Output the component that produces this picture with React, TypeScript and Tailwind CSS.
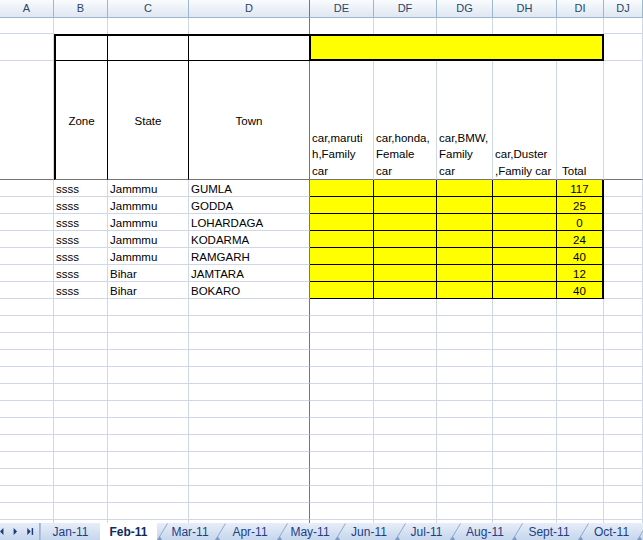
import React from "react"

const COLS = "grid grid-cols-[54px_54px_81px_121px_64px_63px_56px_64px_47px_39px]"
const GRID = "border-[#d0d7e5]"
const FREEZE = "border-r-[#767676]"

const headers = ["A", "B", "C", "D", "DE", "DF", "DG", "DH", "DI", "DJ"]

const rows = [
  { zone: "ssss", state: "Jammmu", town: "GUMLA", total: "117" },
  { zone: "ssss", state: "Jammmu", town: "GODDA", total: "25" },
  { zone: "ssss", state: "Jammmu", town: "LOHARDAGA", total: "0" },
  { zone: "ssss", state: "Jammmu", town: "KODARMA", total: "24" },
  { zone: "ssss", state: "Jammmu", town: "RAMGARH", total: "40" },
  { zone: "ssss", state: "Bihar", town: "JAMTARA", total: "12" },
  { zone: "ssss", state: "Bihar", town: "BOKARO", total: "40" },
]

const tabs = [
  { name: "Jan-11", w: "w-[60px]" },
  { name: "Feb-11", w: "w-[57px]", active: true },
  { name: "Mar-11", w: "w-[58px]" },
  { name: "Apr-11", w: "w-[62px]" },
  { name: "May-11", w: "w-[58px]" },
  { name: "Jun-11", w: "w-[60px]" },
  { name: "Jul-11", w: "w-[55px]" },
  { name: "Aug-11", w: "w-[62px]" },
  { name: "Sept-11", w: "w-[66px]" },
  { name: "Oct-11", w: "w-[59px]" },
]

const cell = "overflow-hidden whitespace-nowrap"
const wrapHead = `flex items-end pl-[2px] leading-[16.5px] border-r ${GRID} border-b border-b-[#767676]`

function EmptyRow() {
  return (
    <div className={`${COLS} h-[17px]`}>
      {headers.map((h, i) => (
        <div key={h} className={`${cell} border-r border-b ${GRID} ${i === 3 ? FREEZE : ""}`} />
      ))}
    </div>
  )
}

function Slant() {
  return (
    <svg className="absolute left-0 top-0 h-[17px] w-[12px]" viewBox="0 0 12 17">
      <path d="M0.5 17 L10.5 0.5" stroke="#8ea9cc" strokeWidth="1" fill="none" />
      <path d="M0 17 L3 13.5 L5 17 Z" fill="#7f9cc4" />
    </svg>
  )
}

export default function App() {
  return (
    <div className="w-[643px] h-[540px] overflow-hidden bg-white font-['Liberation_Sans',Arial,sans-serif] text-[11.5px] text-black">
      <div className="h-[523px] overflow-hidden">
        {/* column headers */}
        <div className={`${COLS} h-[18px]`}>
          {headers.map((h, i) => (
            <div
              key={h}
              className={`flex items-center justify-center border-r border-b border-[#9eb6ce] bg-gradient-to-b from-[#f9fbfe] to-[#dfe7f2] text-[11px] text-[#2b4466] ${i === 3 ? FREEZE : ""}`}
            >
              {h}
            </div>
          ))}
        </div>

        {/* row 1 */}
        <div className={`${COLS} h-[16px]`}>
          <div className={`border-r border-b ${GRID}`} />
          <div className={`border-r ${GRID}`} />
          <div className={`border-r ${GRID}`} />
          <div className={`border-r ${GRID} ${FREEZE}`} />
          <div className={`border-r ${GRID}`} />
          <div className={`border-r ${GRID}`} />
          <div className={`border-r ${GRID}`} />
          <div className={`border-r ${GRID}`} />
          <div className={`border-r ${GRID}`} />
          <div className={`border-r border-b ${GRID}`} />
        </div>

        {/* row 2 */}
        <div className={`${COLS} h-[27px]`}>
          <div className={`border-r border-b ${GRID}`} />
          <div className="border-l-2 border-t-2 border-r border-b border-black" />
          <div className="border-t-2 border-r border-b border-black" />
          <div className="border-t-2 border-r border-b border-black" />
          <div className="col-span-5 bg-[#ffff00] border-t-2 border-r-2 border-b-2 border-l border-black" />
          <div className={`border-r border-b ${GRID}`} />
        </div>

        {/* row 3 */}
        <div className={`${COLS} h-[119px]`}>
          <div className={`border-r ${GRID} border-b border-b-[#767676]`} />
          <div className="flex items-center justify-center pt-[3px] border-l-2 border-r border-black border-b border-b-[#767676]">
            Zone
          </div>
          <div className="flex items-center justify-center pt-[3px] border-r border-black border-b border-b-[#767676]">
            State
          </div>
          <div className={`flex items-center justify-center pt-[3px] border-r ${FREEZE} border-b border-b-[#767676]`}>
            Town
          </div>
          <div className={wrapHead}>
            <div>car,maruti<br />h,Family<br />car</div>
          </div>
          <div className={wrapHead}>
            <div>car,honda,<br />Female<br />car</div>
          </div>
          <div className={wrapHead}>
            <div>car,BMW,<br />Family<br />car</div>
          </div>
          <div className={wrapHead}>
            <div className="whitespace-nowrap">car,Duster<br />,Family car</div>
          </div>
          <div className={`${wrapHead} pl-[5px]`}>Total</div>
          <div className={`border-r ${GRID} border-b border-b-[#767676]`} />
        </div>

        {/* data rows */}
        {rows.map((r, idx) => (
          <div key={idx} className={`${COLS} h-[17px] leading-[16px]`}>
            <div className={`border-r border-b ${GRID}`} />
            <div className={`${cell} pl-[2px] pt-[1px] border-r border-b ${GRID}`}>{r.zone}</div>
            <div className={`${cell} pl-[2px] pt-[1px] border-r border-b ${GRID}`}>{r.state}</div>
            <div className={`${cell} pl-[2px] pt-[1px] border-r border-b ${GRID} ${FREEZE}`}>{r.town}</div>
            <div className="bg-[#ffff00] border-r border-b border-black" />
            <div className="bg-[#ffff00] border-r border-b border-black" />
            <div className="bg-[#ffff00] border-r border-b border-black" />
            <div className="bg-[#ffff00] border-r border-b border-black" />
            <div className={`${cell} bg-[#ffff00] pt-[1px] border-r-2 border-b border-black text-center`}>{r.total}</div>
            <div className={`border-r border-b ${GRID}`} />
          </div>
        ))}

        {Array.from({ length: 14 }).map((_, i) => (
          <EmptyRow key={i} />
        ))}
      </div>

      {/* sheet tabs */}
      <div className="flex h-[17px] bg-gradient-to-b from-[#e7eef8] to-[#c6d6ed] text-[12px] text-[#1c3f86]">
        <div className="relative flex w-[40px] items-center border-r border-[#9eb6ce]">
          <svg className="h-[17px] w-[40px]" viewBox="0 0 40 17">
            <path d="M3.5 5 L0 8.5 L3.5 12 Z" fill="#1c3a78" />
            <path d="M14 5 L17.5 8.5 L14 12 Z" fill="#1c3a78" />
            <path d="M28 5 L31.5 8.5 L28 12 Z" fill="#1c3a78" />
            <rect x="32.5" y="5" width="1.5" height="7" fill="#1c3a78" />
          </svg>
        </div>
        {tabs.map((t, i) => (
          <div
            key={t.name}
            className={`relative flex ${t.w} shrink-0 items-center justify-center ${
              t.active ? "bg-white font-bold text-[#0f2a5c]" : ""
            } ${i === 0 ? "border-l border-[#a9bfdc]" : ""}`}
          >
            {i > 1 && <Slant />}
            <span className={i > 1 ? "pl-[8px]" : ""}>{t.name}</span>
          </div>
        ))}
        <div className="relative flex-1">
          <Slant />
        </div>
      </div>
    </div>
  )
}
